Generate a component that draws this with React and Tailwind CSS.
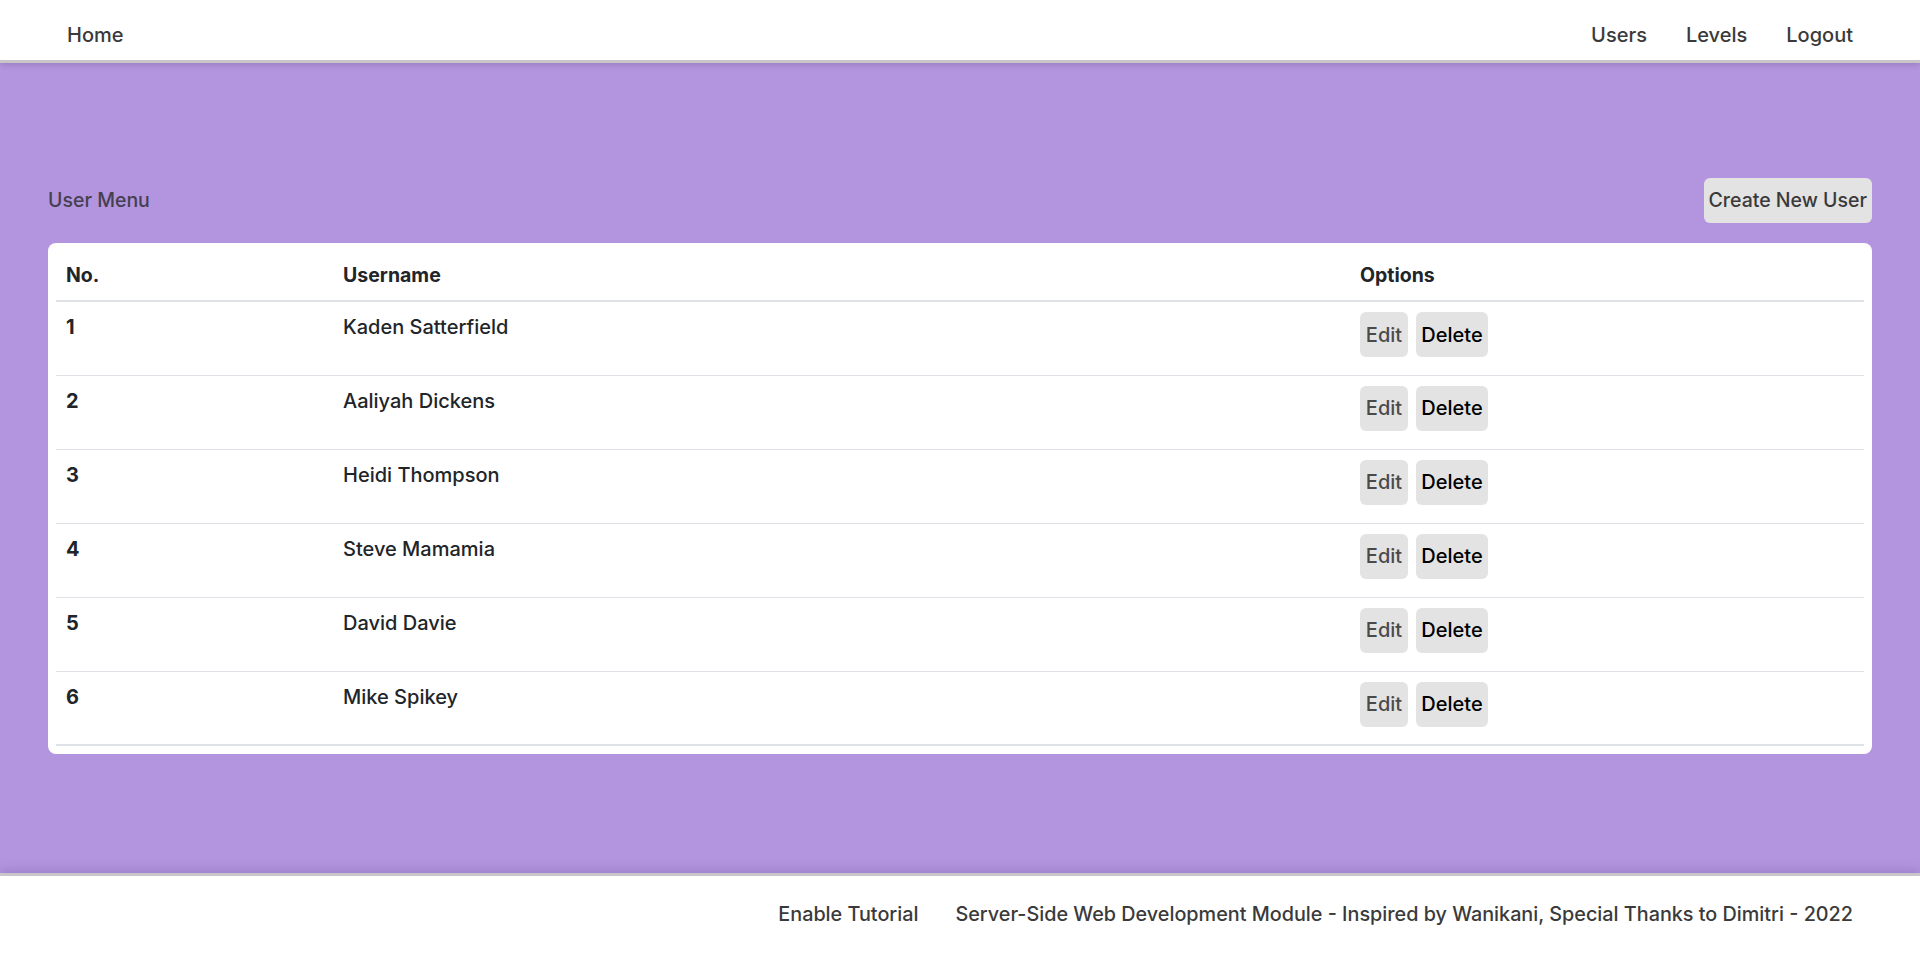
import { useState } from "react";

const users = [
  { id: 1, name: "Kaden Satterfield" },
  { id: 2, name: "Aaliyah Dickens" },
  { id: 3, name: "Heidi Thompson" },
  { id: 4, name: "Steve Mamamia" },
  { id: 5, name: "David Davie" },
  { id: 6, name: "Mike Spikey" },
];

const font = { fontFamily: "Inter, 'Noto Sans', sans-serif" };

export default function App() {
  const [list] = useState(users);

  return (
    <div className="min-h-screen flex flex-col bg-white" style={font}>
      {/* Navbar */}
      <header className="relative z-10 h-[63px] bg-white border-b-[3px] border-[#c9c6ca] shadow-[0_2px_6px_rgba(0,0,0,0.15)] flex items-center justify-between px-[67px] pt-[10px]">
        <a className="text-[20px] font-medium text-[#3a3a3a]">Home</a>
        <nav className="flex gap-[39px] text-[20px] font-medium text-[#3a3a3a]">
          <a>Users</a>
          <a>Levels</a>
          <a>Logout</a>
        </nav>
      </header>

      <main className="flex-1 bg-[#b395df] pt-[115px] px-[48px]">
        <div className="flex items-center justify-between">
          <h2 className="text-[19.5px] font-medium text-[#45404f]">User Menu</h2>
          <button className="h-[45px] px-[5px] rounded-md bg-[#e3e3e3] text-[19.5px] font-medium text-[#3a3a3a]">
            Create New User
          </button>
        </div>

        <div className="mt-[20px] bg-white rounded-lg p-[8px]">
          <table className="w-full text-left text-[#212529]">
            <thead>
              <tr className="border-b-2 border-[#dee2e6] h-[50px]">
                <th className="w-[287px] pl-[10px] text-[19.5px] font-bold">No.</th>
                <th className="w-[1017px] text-[19.5px] font-bold">Username</th>
                <th className="text-[19.5px] font-bold">Options</th>
              </tr>
            </thead>
            <tbody>
              {list.map((u, i) => (
                <tr
                  key={u.id}
                  className={`h-[74px] align-top ${i === list.length - 1 ? "border-b-2 border-[#dee2e6]" : "border-b border-[#dee2e6]"}`}
                >
                  <td className="pl-[10px] pt-[13px] text-[20px] leading-[24px] font-bold">{u.id}</td>
                  <td className="pt-[13px] text-[20px] leading-[24px] font-medium">{u.name}</td>
                  <td className="pt-[10px]">
                    <div className="flex gap-[8px]">
                      <button className="h-[45px] w-[48px] rounded-md bg-[#e3e3e3] text-[20px] font-medium text-[#4a4a4a]">Edit</button>
                      <button className="h-[45px] w-[72px] rounded-md bg-[#e3e3e3] text-[20px] font-medium text-black">Delete</button>
                    </div>
                  </td>
                </tr>
              ))}
            </tbody>
          </table>
        </div>
      </main>

      {/* Footer */}
      <footer className="relative z-10 h-[80px] bg-white border-t-[3px] border-[#c9c6ca] shadow-[0_-4px_10px_rgba(80,40,120,0.18)] flex items-center justify-end px-[67px] gap-[37px] text-[19.8px] font-medium text-[#3a3a3a]">
        <a>Enable Tutorial</a>
        <span>Server-Side Web Development Module - Inspired by Wanikani, Special Thanks to Dimitri - 2022</span>
      </footer>
    </div>
  );
}
